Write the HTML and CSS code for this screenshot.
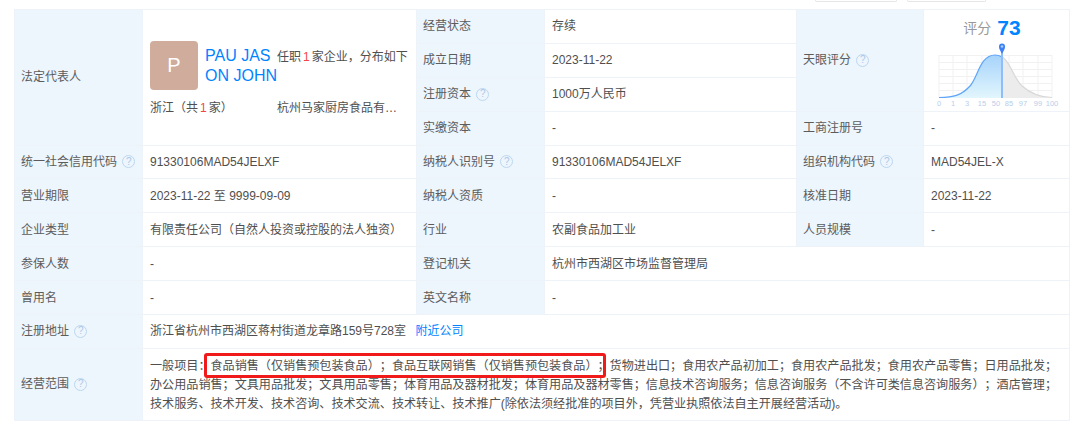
FILE: index.html
```html
<!DOCTYPE html>
<html lang="zh-CN">
<head>
<meta charset="utf-8">
<title>工商信息</title>
<link rel="stylesheet" href="styles.css">
</head>
<body>
<div class="toolbar"><span class="tool-btn tool-a"></span><span class="tool-btn tool-b"></span></div>
<table class="info">
<colgroup><col class="c1"><col class="c2"><col class="c3"><col class="c4"><col class="c5"><col class="c6"></colgroup>
<tbody>
<tr>
<th rowspan="4">法定代表人</th>
<td rowspan="4">
  <div class="rep">
    <div class="rep-top">
      <div class="avatar">P</div>
      <a class="rep-name">PAU JASON JOHN</a>
      <div class="rep-note">任职<em>1</em>家企业，分布如下</div>
    </div>
    <div class="rep-bottom">
      <span class="rep-region">浙江（共<em>1</em>家）</span>
      <span class="rep-company">杭州马家厨房食品有…</span>
    </div>
  </div>
</td>
<th>经营状态</th><td>存续</td>
<th rowspan="3">天眼评分 <span class="tip">?</span></th>
<td rowspan="3" class="score-cell">
  <div class="score-head"><span class="score-label">评分</span><span class="score-num">73</span></div>
  <svg class="chart" width="146" height="68" viewBox="0 0 146 68">
    <defs>
      <linearGradient id="bluefill" x1="0" y1="0" x2="0" y2="1"><stop offset="0" stop-color="#a6d3fb"/><stop offset="1" stop-color="#e2f6fd"/></linearGradient>
      <clipPath id="leftside"><rect x="0" y="0" width="78" height="68"/></clipPath>
      <clipPath id="rightside"><rect x="78" y="0" width="68" height="68"/></clipPath>
    </defs>
    <g class="grid">
      <path d="M15 14V57M29 14V57M43 14V57M58 14V57M72 14V57M85 14V57M99 14V57M114 14V57M128 14V57"/>
      <path d="M15 14.500H128M15 21.500H128M15 28.500H128M15 35.500H128M15 42.500H128M15 49.500H128M15 56.500H128"/>
    </g>
    <path clip-path="url(#rightside)" fill="#ececec" d="M15 57C30 56.500 38 54 46 45C54 36 56 14 71 14C86 14 88 36 98 45C106 52 116 56.500 128 57Z"/>
    <path clip-path="url(#leftside)" fill="url(#bluefill)" d="M15 57C30 56.500 38 54 46 45C54 36 56 14 71 14C86 14 88 36 98 45C106 52 116 56.500 128 57Z"/>
    <path clip-path="url(#rightside)" fill="none" stroke="#d8d8d8" stroke-width="1.200" d="M15 56.500C30 56.500 38 54 46 45C54 36 56 14 71 14C86 14 88 36 98 45C106 52 116 56.500 128 56.500"/>
    <path clip-path="url(#leftside)" fill="none" stroke="#5ea4fa" stroke-width="1.200" d="M15 56.500C30 56.500 38 54 46 45C54 36 56 14 71 14C86 14 88 36 98 45C106 52 116 56.500 128 56.500"/>
    <rect x="77" y="10" width="2" height="47" fill="#8fbcfb"/>
    <path d="M78 13C76 9 75 8 75 5.500A3 3 0 0 1 81 5.500C81 8 80 9 78 13Z" fill="#3d80f5"/>
    <circle cx="78" cy="5.500" r="1.300" fill="#a9cbfb"/>
    <g class="axis">
      <text x="15" y="65">0</text><text x="29" y="65">1</text><text x="43" y="65">3</text><text x="58" y="65">15</text><text x="72" y="65">50</text><text x="85" y="65">85</text><text x="99" y="65">97</text><text x="114" y="65">99</text><text x="128" y="65">100</text>
    </g>
  </svg>
</td>
</tr>
<tr><th>成立日期</th><td>2023-11-22</td></tr>
<tr><th>注册资本 <span class="tip">?</span></th><td>1000万人民币</td></tr>
<tr><th>实缴资本</th><td>-</td><th>工商注册号</th><td>-</td></tr>
<tr><th>统一社会信用代码 <span class="tip">?</span></th><td>91330106MAD54JELXF</td><th>纳税人识别号 <span class="tip">?</span></th><td>91330106MAD54JELXF</td><th>组织机构代码 <span class="tip">?</span></th><td>MAD54JEL-X</td></tr>
<tr><th>营业期限</th><td>2023-11-22 至 9999-09-09</td><th>纳税人资质</th><td>-</td><th>核准日期</th><td>2023-11-22</td></tr>
<tr><th>企业类型</th><td>有限责任公司（自然人投资或控股的法人独资）</td><th>行业</th><td>农副食品加工业</td><th>人员规模</th><td>-</td></tr>
<tr><th>参保人数</th><td>-</td><th>登记机关</th><td colspan="3">杭州市西湖区市场监督管理局</td></tr>
<tr><th>曾用名</th><td>-</td><th>英文名称</th><td colspan="3">-</td></tr>
<tr><th>注册地址 <span class="tip">?</span></th><td colspan="5">浙江省杭州市西湖区蒋村街道龙章路159号728室 <a class="near">附近公司</a></td></tr>
<tr class="scope-row"><th>经营范围 <span class="tip">?</span></th><td colspan="5" class="scope">一般项目：<span class="mark">食品销售（仅销售预包装食品）；食品互联网销售（仅销售预包装食品）；</span>货物进出口；食用农产品初加工；食用农产品批发；食用农产品零售；日用品批发；<br>办公用品销售；文具用品批发；文具用品零售；体育用品及器材批发；体育用品及器材零售；信息技术咨询服务；信息咨询服务（不含许可类信息咨询服务）；酒店管理；<br>技术服务、技术开发、技术咨询、技术交流、技术转让、技术推广(除依法须经批准的项目外，凭营业执照依法自主开展经营活动)。</td></tr>
</tbody>
</table>
</body>
</html>
```
FILE: styles.css
```css
* { box-sizing: border-box; }
html, body { margin: 0; padding: 0; background: #fff; }
body {
  width: 1080px;
  height: 434px;
  overflow: hidden;
  font-family: "Liberation Sans", "Noto Sans CJK SC", sans-serif;
  font-size: 12px;
  color: #4f4f4f;
  text-spacing-trim: space-all;
}
.toolbar { display: flex; height: 2px; padding-left: 815px; gap: 10px; margin-bottom: 7px; }
.tool-btn { display: block; height: 2px; border: 1px solid #e6e6e6; border-top: 0; border-radius: 0 0 2px 2px; }
.tool-a { width: 82px; }
.tool-b { width: 79px; }

.info { margin-left: 14px; width: 1055px; table-layout: fixed; border-collapse: collapse; }
.c1 { width: 128px; } .c2 { width: 274px; } .c3 { width: 128px; }
.c4 { width: 252px; } .c5 { width: 127px; } .c6 { width: 146px; }
.info tr { height: 33.900px; }
.info th, .info td { border: 1px solid #eef3fa; padding: 0 6px; font-weight: 400; text-align: left; line-height: 20px; }
.info th { background: #edf5fd; color: #5c5c5c; white-space: nowrap; }
.info td { padding-left: 7px; }
.info .scope-row { height: 72px; }
.info .scope { font-size: 12.100px; line-height: 19px; padding: 5px 0 2px 7px; white-space: nowrap; }

em { font-style: normal; color: #f54545; margin: 0 2px; }
a { color: #0084ff; }
.near { margin-left: 6px; }
.tip {
  display: inline-flex; align-items: center; justify-content: center;
  width: 13px; height: 13px; margin: -2px 0 0 2px; vertical-align: middle;
  border: 1px solid #bcd7ef; border-radius: 50%;
  color: #a9c9e8; font-size: 10px; line-height: 1;
}

.rep { display: flex; flex-direction: column; gap: 8px; margin-top: 4px; }
.rep-top { display: flex; align-items: flex-start; }
.avatar {
  flex: none; width: 48px; height: 49px; border-radius: 4px;
  background: #cfac9b; color: #fff; font-size: 20px;
  display: flex; align-items: center; justify-content: center;
}
.rep-name { flex: none; width: 72px; margin: 5px 0 0 7px; font-size: 16px; line-height: 20px; word-break: break-all; }
.rep-note { margin: 6px 0 0 0; white-space: nowrap; line-height: 20px; }
.rep-bottom { display: flex; }
.rep-region { width: 127px; flex: none; }
.rep-company { white-space: nowrap; }

.info .score-cell { padding: 0; vertical-align: top; }
.score-head { display: flex; justify-content: center; align-items: center; gap: 6px; height: 31px; padding: 4px 9px 0 0; }
.score-label { color: #999; font-size: 14px; }
.score-num { color: #0084ff; font-size: 21px; font-weight: 700; line-height: 20px; }
.chart { display: block; }
.grid path { fill: none; stroke: #f1f1f1; stroke-width: 1; }
.axis text { fill: #b9cdea; font-size: 7.500px; text-anchor: middle; font-family: "Liberation Sans", sans-serif; }

.mark { position: relative; }
.mark::after {
  content: ""; position: absolute; left: -6px; right: 4px; top: -6px; bottom: -5px;
  border: 3px solid #f01a1a; border-radius: 3px;
}
```
